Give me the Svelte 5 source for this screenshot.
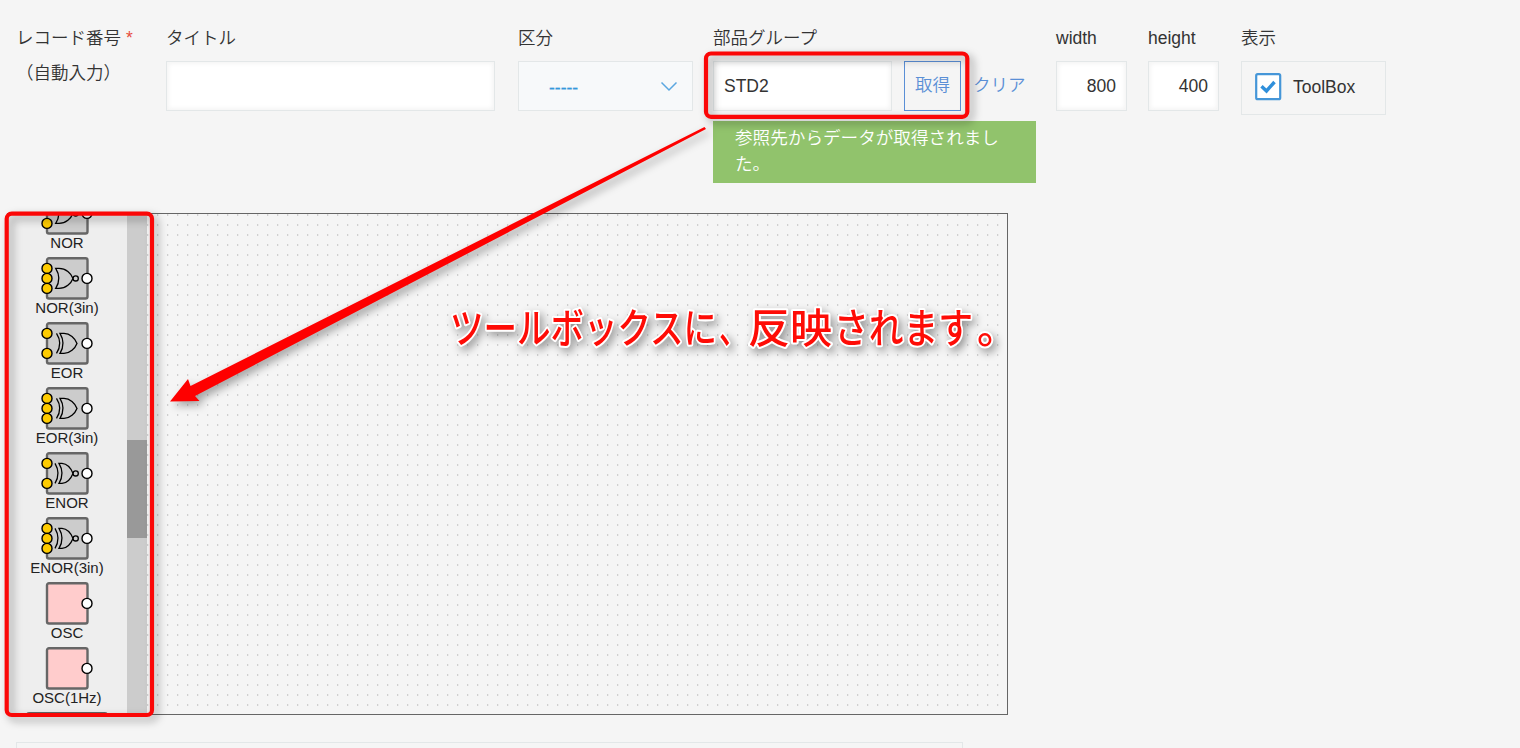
<script>
  const parts = [
    { name: 'NOR', pins: 2, gate: 'nor' },
    { name: 'NOR(3in)', pins: 3, gate: 'nor' },
    { name: 'EOR', pins: 2, gate: 'eor' },
    { name: 'EOR(3in)', pins: 3, gate: 'eor' },
    { name: 'ENOR', pins: 2, gate: 'enor' },
    { name: 'ENOR(3in)', pins: 3, gate: 'enor' },
    { name: 'OSC', pins: 0, gate: 'osc' },
    { name: 'OSC(1Hz)', pins: 0, gate: 'osc' }
  ];
  const pinRows = { 0: [], 2: [12, 32], 3: [12, 22, 32] };
  const gatePaths = {
    nor: 'M18.700 12H22C29 12 34 17 36 22C34 27 29 32 22 32H18.700Q25 22 18.700 12Z',
    eor: 'M19.500 12Q26 22 19.500 32M23 12H27C33 12 38 17 40 22C38 27 33 32 27 32H23Q29 22 23 12Z',
    enor: 'M18 12Q24 22 18 32M22 12H25C30 12.500 34 17 36 22C34 27 30 31.500 25 32H22Q28 22 22 12Z',
    osc: ''
  };
</script>

<div class="page">
  <div class="form">
    <div class="field record">
      <div class="label">レコード番号<span class="req">*</span></div>
      <div class="auto">（自動入力）</div>
    </div>
    <div class="field title">
      <div class="label">タイトル</div>
      <div class="input"></div>
    </div>
    <div class="field kind">
      <div class="label">区分</div>
      <div class="select">
        <span>-----</span>
        <svg width="18" height="12" viewBox="0 0 18 12"><path d="M1.500 1.500L9 9L16.500 1.500" fill="none" stroke="#5ba7e0" stroke-width="1.500" /></svg>
      </div>
    </div>
    <div class="field group">
      <div class="label">部品グループ</div>
      <div class="lookup">
        <div class="input">STD2</div>
        <div class="get">取得</div>
        <div class="clear">クリア</div>
      </div>
      <div class="message">参照先からデータが取得されました。</div>
    </div>
    <div class="field w">
      <div class="label">width</div>
      <div class="input num">800</div>
    </div>
    <div class="field h">
      <div class="label">height</div>
      <div class="input num">400</div>
    </div>
    <div class="field show">
      <div class="label">表示</div>
      <div class="checks">
        <svg width="27" height="28" viewBox="0 0 27 28">
          <rect x="1.200" y="1.200" width="24" height="25" rx="1.500" fill="#fff" stroke="#4596d8" stroke-width="2.200" />
          <path d="M6.500 13.200L11.500 18L19.500 9" fill="none" stroke="#2f8fdb" stroke-width="3.400" />
        </svg>
        <span>ToolBox</span>
      </div>
    </div>
  </div>

  <div class="editor">
    <div class="toolbox">
      <div class="list">
        {#each parts as p}
          <div class="part">
            <svg width="60" height="44" viewBox="0 0 60 44">
              <rect x="10" y="2.200" width="40.500" height="40.300" rx="2" fill={p.gate === 'osc' ? '#ffcccc' : '#cccccc'} stroke="#666" stroke-width="2.400" />
              <path d={gatePaths[p.gate]} transform="translate(0 .4)" fill="none" stroke="#000" stroke-width="1.300" />
              {#if p.gate === 'nor' || p.gate === 'enor'}
                <circle cx="38.700" cy="22.400" r="2.600" fill="#ccc" stroke="#000" stroke-width="1.300" />
              {/if}
              {#each pinRows[p.pins] as y}
                <circle cx="10" cy={y + 0.4} r="5" fill="#ffcc00" stroke="#000" stroke-width="1.400" />
              {/each}
              <circle cx="50" cy="22.400" r="5" fill="#fff" stroke="#000" stroke-width="1.400" />
            </svg>
            <span>{p.name}</span>
          </div>
        {/each}
        <div class="next"></div>
      </div>
      <div class="scroll"><div class="thumb"></div></div>
    </div>
    <div class="canvas"></div>
  </div>

  <div class="panel"></div>

  <svg class="notes" width="1520" height="748" viewBox="0 0 1520 748">
    <g class="marks">
      <rect x="706" y="53.500" width="261.300" height="63.300" rx="5" />
      <rect x="6.700" y="213.700" width="145.300" height="501.300" rx="5" />
      <polygon points="170,401.500 188,379 190.500,386 704.500,127 706,129 195,396 199.500,401" />
    </g>
    <g class="caption">
      <text x="450" y="342.500" textLength="267" lengthAdjust="spacingAndGlyphs">ツールボックスに</text>
      <text x="719" y="342.500" textLength="29" lengthAdjust="spacingAndGlyphs">、</text>
      <text x="748" y="342.500" textLength="84" lengthAdjust="spacingAndGlyphs">反映</text>
      <text x="834" y="342.500" textLength="139" lengthAdjust="spacingAndGlyphs">されます</text>
      <text x="977" y="342.500">。</text>
    </g>
  </svg>
</div>

<style>
  :global(body) { background: #f5f5f5; }
  .page {
    position: relative; width: 1520px; height: 748px; overflow: hidden;
    background: #f5f5f5; color: #333;
    font: 350 17.5px/26px "Liberation Sans", "Noto Sans CJK JP", sans-serif;
    display: flex; flex-direction: column; box-sizing: border-box;
  }
  .page :global(*) { box-sizing: border-box; }
  .form { display: flex; height: 213px; padding: 25px 0 0 16px; flex: none; }
  .field { flex: none; }
  .record { width: 150px; }
  .title { width: 352px; }
  .kind { width: 195px; }
  .group { width: 343px; }
  .w { width: 92px; }
  .h { width: 93px; }
  .label { height: 36px; white-space: nowrap; }
  .req { color: #e74c3c; margin-left: 5px; }
  .auto { margin-top: -1px; white-space: nowrap; }
  .input {
    height: 50px; border: 1px solid #e3e7e8; background: #fff;
    box-shadow: 2px 2px 4px #f5f5f5 inset, -2px -2px 4px #f5f5f5 inset;
    line-height: 48px; padding: 0 10px;
  }
  .title .input { width: 329px; }
  .select {
    width: 175px; height: 50px; border: 1px solid #e3e7e8; background: #f7f9fa;
    display: flex; align-items: center; justify-content: space-between;
    padding: 2px 14px 0 30px; color: #3498db;
  }
  .select span { -webkit-text-stroke: 0.3px #3498db; padding-top: 2px; }
  .lookup { display: flex; line-height: 48px; }
  .lookup .input { width: 179px; }
  .get { width: 57px; height: 50px; margin-left: 12px; border: 1px solid #5a8fd6; color: #5a8fd6; text-align: center; line-height: 47px; }
  .clear { margin-left: 12px; color: #5a8fd6; white-space: nowrap; }
  .message { width: 323px; height: 62px; margin-top: 10px; padding: 4px 22px; background: #91c36c; color: #fff; font-size: 17.6px; }
  .num { width: 71px; text-align: right; }
  .checks { width: 145px; height: 54px; border: 1px solid #e3e7e8; display: flex; align-items: center; padding: 0 13px 2px; gap: 11px; }
  .editor { width: 1001px; height: 502px; margin-left: 7px; border: 1px solid #666; border-left: 0; display: flex; flex: none; }
  .toolbox { width: 140px; display: flex; overflow: hidden; flex: none; background: #eee; }
  .list { width: 120px; margin-top: -23px; }
  .part { height: 65px; display: flex; flex-direction: column; align-items: center; font: 15px/15px "Liberation Sans", sans-serif; color: #222; }
  .part svg { display: block; flex: none; }
  .next { width: 82px; height: 44px; margin: 1px auto; border: 2px solid #666; border-radius: 3px; background: #ccc; }
  .scroll { width: 20px; background: #ccc; padding-top: 226px; }
  .thumb { height: 98px; background: #999; }
  .canvas { flex: 1; background-image: radial-gradient(circle at 0.7px 1px, #cecece 0.5px, transparent 1.1px); background-size: 10px 10px; background-position: 0 0; }
  .panel { width: 947px; height: 40px; margin: 27px 0 0 16px; border: 1px solid #e3e7e8; flex: none; }
  .notes { position: absolute; left: 0; top: 0; }
  .marks { filter: drop-shadow(4px 4px 4px rgba(0, 0, 0, 0.35)); }
  .marks rect { fill: none; stroke: #fb0707; stroke-width: 4.200; }
  .marks polygon { fill: #fe0000; }
  .caption {
    font-family: "Noto Sans CJK JP", sans-serif; font-size: 41px; font-weight: 500;
    fill: #fe0c06; stroke: #fff; stroke-width: 4px; stroke-linejoin: round; paint-order: stroke;
    filter: drop-shadow(3px 4px 4px rgba(0, 0, 0, 0.4));
  }
</style>
